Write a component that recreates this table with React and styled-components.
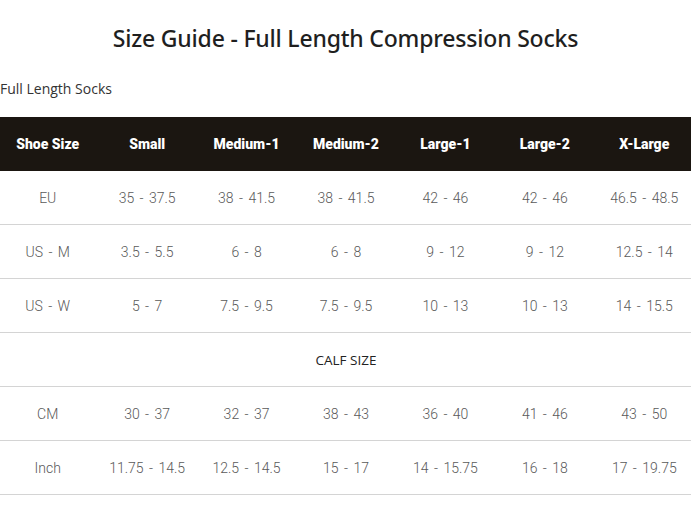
import styled, { createGlobalStyle } from "styled-components";

const GlobalStyle = createGlobalStyle`
  html, body {
    margin: 0;
    padding: 0;
    background: #fff;
  }
  body {
    font-family: "Open Sans", "Liberation Sans", sans-serif;
    color: #222;
    overflow: hidden;
  }
`;

// SIZE DATA FOR EACH ROW
const sizes = ["Small", "Medium-1", "Medium-2", "Large-1", "Large-2", "X-Large"];

const shoeRows = [
  { label: "EU", values: ["35 - 37.5", "38 - 41.5", "38 - 41.5", "42 - 46", "42 - 46", "46.5 - 48.5"] },
  { label: "US - M", values: ["3.5 - 5.5", "6 - 8", "6 - 8", "9 - 12", "9 - 12", "12.5 - 14"] },
  { label: "US - W", values: ["5 - 7", "7.5 - 9.5", "7.5 - 9.5", "10 - 13", "10 - 13", "14 - 15.5"] },
];

const calfRows = [
  { label: "CM", values: ["30 - 37", "32 - 37", "38 - 43", "36 - 40", "41 - 46", "43 - 50"] },
  { label: "Inch", values: ["11.75 - 14.5", "12.5 - 14.5", "15 - 17", "14 - 15.75", "16 - 18", "17 - 19.75"] },
];

const App = () => {
  return (
    <Page>
      <GlobalStyle />
      <Title>Size Guide - Full Length Compression Socks</Title>
      <Subtitle>Full Length Socks</Subtitle>
      <Table>
        <HeadRow>
          <HeadCell>Shoe Size</HeadCell>
          {sizes.map((s) => (
            <HeadCell key={s}>{s}</HeadCell>
          ))}
        </HeadRow>
        {shoeRows.map((row) => (
          <Row key={row.label}>
            <Cell>{row.label}</Cell>
            {row.values.map((v, i) => (
              <Cell key={i}>{v}</Cell>
            ))}
          </Row>
        ))}
        <Row>
          <SectionCell>CALF SIZE</SectionCell>
        </Row>
        {calfRows.map((row) => (
          <Row key={row.label}>
            <Cell>{row.label}</Cell>
            {row.values.map((v, i) => (
              <Cell key={i}>{v}</Cell>
            ))}
          </Row>
        ))}
      </Table>
    </Page>
  );
};

export default App;

const Page = styled.div`
  width: 691px;
  padding-top: 20px;
`;

const Title = styled.h1`
  margin: 0;
  text-align: center;
  font-family: "Noto Sans", "Open Sans", sans-serif;
  font-weight: 500;
  font-size: 23px;
  letter-spacing: -0.2px;
  line-height: 36px;
  color: #1f1f1f;
`;

const Subtitle = styled.div`
  margin-top: 23px;
  font-size: 14px;
  line-height: 20px;
  color: #333;
`;

const Table = styled.div`
  margin-top: 18px;
  margin-left: -2px;
  width: 696px;
`;

const HeadRow = styled.div`
  display: grid;
  grid-template-columns: repeat(7, 1fr);
  height: 54px;
  align-items: center;
  background: #1b1611;
`;

const HeadCell = styled.div`
  text-align: center;
  font-family: "Roboto", "Liberation Sans", sans-serif;
  font-weight: 900;
  font-size: 14px;
  color: #fff;
`;

const Row = styled.div`
  display: grid;
  grid-template-columns: repeat(7, 1fr);
  height: 53px;
  align-items: center;
  border-bottom: 1px solid #d4d4d4;
`;

const Cell = styled.div`
  text-align: center;
  font-family: "Roboto", "Liberation Sans", sans-serif;
  font-weight: 300;
  font-size: 14px;
  word-spacing: 2px;
  color: #595959;
`;

const SectionCell = styled.div`
  grid-column: 1 / -1;
  text-align: center;
  font-size: 13.5px;
  color: #222;
`;
